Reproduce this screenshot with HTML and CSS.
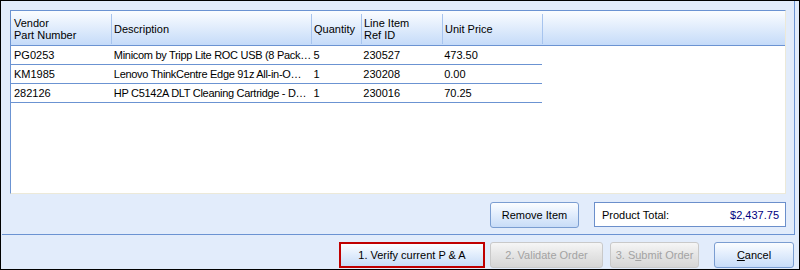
FILE: index.html
```html
<!DOCTYPE html>
<html lang="en">

<head>
    <meta charset="UTF-8">
    <title>Order Items</title>
    <link rel="stylesheet" href="styles.css">
</head>

<body>
    <div class="window">
        <!-- upper panel with the item grid -->
        <div class="panel">
            <div class="grid">
                <div class="grid-head">
                    <div class="col c-part">Vendor<br>Part Number</div>
                    <div class="col c-desc">Description</div>
                    <div class="col c-qty">Quantity</div>
                    <div class="col c-ref">Line Item<br>Ref ID</div>
                    <div class="col c-price">Unit Price</div>
                </div>
                <div class="grid-row">
                    <div class="col c-part">PG0253</div>
                    <div class="col c-desc">Minicom by Tripp Lite ROC USB (8 Pack…</div>
                    <div class="col c-qty">5</div>
                    <div class="col c-ref">230527</div>
                    <div class="col c-price">473.50</div>
                </div>
                <div class="grid-row">
                    <div class="col c-part">KM1985</div>
                    <div class="col c-desc">Lenovo ThinkCentre Edge 91z All-in-O…</div>
                    <div class="col c-qty">1</div>
                    <div class="col c-ref">230208</div>
                    <div class="col c-price">0.00</div>
                </div>
                <div class="grid-row">
                    <div class="col c-part">282126</div>
                    <div class="col c-desc">HP C5142A DLT Cleaning Cartridge - D…</div>
                    <div class="col c-qty">1</div>
                    <div class="col c-ref">230016</div>
                    <div class="col c-price">70.25</div>
                </div>
            </div>

            <div class="panel-foot">
                <button class="btn btn-remove">Remove Item</button>
                <div class="total">
                    <span>Product Total:</span>
                    <span class="total-value">$2,437.75</span>
                </div>
            </div>
        </div>

        <!-- step buttons -->
        <div class="actions">
            <button class="btn btn-verify">1. Verify current P &amp; A</button>
            <button class="btn btn-validate" disabled>2. Validate Order</button>
            <button class="btn btn-submit" disabled>3. S<u>u</u>bmit Order</button>
            <button class="btn btn-cancel"><u>C</u>ancel</button>
        </div>
    </div>
</body>

</html>
```

FILE: styles.css
```css
body {
    margin: 0;
    font-family: "Liberation Sans", Arial, sans-serif;
    font-size: 11px;
    color: #000;
}

.window {
    width: 800px;
    height: 270px;
    box-sizing: border-box;
    border: 1px solid #000;
    background-color: #e2ecfb;
}

.panel {
    width: 793px;
    height: 234px;
    box-sizing: border-box;
    margin-left: 1px;
    padding: 9px 0 0 8px;
    border-right: 1px solid #6b93d2;
    border-bottom: 1px solid #6b93d2;
}

/* item grid */

.grid {
    width: 776px;
    height: 184px;
    box-sizing: border-box;
    background-color: #fff;
    border-top: 1px solid #6b93d2;
    border-left: 1px solid #6b93d2;
    border-right: 1px solid #ece9d8;
    border-bottom: 1px solid #ece9d8;
}

.grid-head {
    display: flex;
    height: 34px;
    background: linear-gradient(#fbfdff, #c5dbf9);
    border-bottom: 1px solid #6b93d2;
}

.grid-head .col {
    display: flex;
    align-items: center;
    margin: 3px 0 1px;
    line-height: 12px;
    border-right: 1px solid #a7c4ee;
}

.grid-row {
    display: flex;
    width: 531px;
    height: 18px;
    line-height: 18px;
    border-bottom: 1px solid #6b93d2;
}

.col {
    box-sizing: border-box;
    padding-left: 2px;
    white-space: nowrap;
    overflow: hidden;
}

.c-part {
    width: 101px;
    padding-left: 3px;
}

.c-desc {
    width: 200px;
}

.grid-row .c-desc {
    letter-spacing: -0.3px;
}

.c-qty {
    width: 50px;
}

.c-ref {
    width: 81px;
}

.c-price {
    width: 100px;
}

/* buttons */

.btn {
    box-sizing: border-box;
    height: 26px;
    padding: 0;
    font-family: "Liberation Sans", Arial, sans-serif;
    font-size: 11px;
    color: #000;
    border: 1px solid #7a9dd1;
    border-radius: 3px;
    background: linear-gradient(#fbfdff, #e3eefd 45%, #c8dcf7);
}

.btn:disabled {
    color: #a3a3a3;
    border-color: #c9c9c9;
    background: linear-gradient(#f6f6f6, #e6e6e6 45%, #d6d6d6);
}

.panel-foot {
    display: flex;
    justify-content: flex-end;
    width: 776px;
    margin-top: 8px;
}

.btn-remove {
    width: 89px;
    margin-right: 15px;
}

.total {
    display: flex;
    justify-content: space-between;
    align-items: center;
    box-sizing: border-box;
    width: 192px;
    height: 25px;
    padding: 0 6px 0 7px;
    background-color: #fff;
    border: 1px solid #6b8fcb;
}

.total-value {
    color: #000080;
}

.actions {
    display: flex;
    justify-content: flex-end;
    padding: 7px 5px 0 0;
}

.btn-verify {
    width: 146px;
    border: 2px solid #c00000;
    border-radius: 0;
    margin-right: 5px;
}

.btn-validate {
    width: 113px;
    margin-right: 7px;
}

.btn-submit {
    width: 89px;
    margin-right: 15px;
}

.btn-cancel {
    width: 80px;
}
```
